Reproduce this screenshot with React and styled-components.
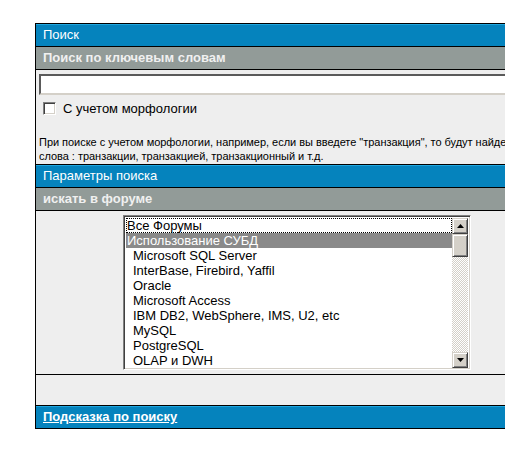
import React from "react";
import styled, { createGlobalStyle } from "styled-components";

const forums = [
  { title: "Все Форумы", focused: true },
  { title: "Использование СУБД", selected: true },
  { title: "Microsoft SQL Server", nested: true },
  { title: "InterBase, Firebird, Yaffil", nested: true },
  { title: "Oracle", nested: true },
  { title: "Microsoft Access", nested: true },
  { title: "IBM DB2, WebSphere, IMS, U2, etc", nested: true },
  { title: "MySQL", nested: true },
  { title: "PostgreSQL", nested: true },
  { title: "OLAP и DWH", nested: true },
];

const GlobalStyle = createGlobalStyle`
  html, body {
    margin: 0;
    padding: 0;
    background: #fff;
    overflow: hidden;
  }
  body {
    font-family: "Liberation Sans", Arial, sans-serif;
  }
`;

const Page = styled.div`
  padding: 23px 0 0 35px;
  width: 600px;
`;

const Panel = styled.div`
  width: 522px;
  background: #000;
  padding: 1px;
  display: flex;
  flex-direction: column;
  gap: 1px;
`;

const BlueRow = styled.div`
  height: 22px;
  line-height: 22px;
  padding-left: 7px;
  background: #0583bd;
  box-shadow: inset 0 1px 0 #1fa6df;
  color: #fff;
  font-size: 13px;
`;

const GreyRow = styled.div`
  height: 22px;
  line-height: 22px;
  padding-left: 7px;
  background: #929b98;
  color: #f0f0f0;
  font-size: 13px;
  font-weight: bold;
`;

const Cell = styled.div`
  background: #eeeeee;
  height: ${(p) => p.height}px;
  box-sizing: border-box;
  padding: ${(p) => p.pad || "0"};
  display: flex;
  flex-direction: column;
  align-items: ${(p) => (p.center ? "center" : "stretch")};
`;

const TextInput = styled.input`
  box-sizing: border-box;
  height: 21px;
  margin: 0 3px;
  width: calc(100% - 6px);
  background: #fff;
  border-style: solid;
  border-width: 2px 1px 2px 2px;
  border-color: #5a5a5a #d4d0c8 #d4d0c8 #5a5a5a;
  outline: none;
  padding: 0 2px;
  font: 13px "Liberation Sans", Arial, sans-serif;
`;

const CheckRow = styled.label`
  display: flex;
  align-items: center;
  gap: 7px;
  margin: 6px 0 0 7px;
  font-size: 13px;
  color: #000;
  height: 14px;
`;

const CheckBox = styled.input`
  appearance: none;
  margin: 0;
  width: 13px;
  height: 13px;
  box-sizing: border-box;
  background: #fff;
  border: 1px solid;
  border-color: #808080 #fff #fff #808080;
  box-shadow: inset 1px 1px 0 #404040, inset -1px -1px 0 #d4d0c8;
`;

const Hint = styled.p`
  margin: 20px 0 0 3px;
  font-size: 11px;
  line-height: 14px;
  letter-spacing: -0.03px;
  color: #000;
  white-space: nowrap;
`;

const ListBox = styled.div`
  width: 348px;
  height: 155px;
  box-sizing: border-box;
  display: flex;
  background: #fff;
  border: 1px solid;
  border-color: #808080 #fff #fff #808080;
  box-shadow: inset 1px 1px 0 #404040, inset -1px -1px 0 #d4d0c8;
  padding: 2px 2px 1px 2px;
`;

const Options = styled.div`
  flex: 1;
  display: flex;
  flex-direction: column;
  overflow: hidden;
`;

const Option = styled.div`
  height: 15px;
  line-height: 15px;
  box-sizing: border-box;
  padding-left: ${(p) => (p.nested ? 7 : 1)}px;
  font-size: 13px;
  white-space: nowrap;
  color: ${(p) => (p.selected ? "#fff" : "#000")};
  background: ${(p) => (p.selected ? "#8a8a8a" : "transparent")};
  outline: ${(p) => (p.focused ? "1px dotted #000" : "none")};
  outline-offset: -1px;
`;

const ScrollBar = styled.div`
  width: 16px;
  display: flex;
  flex-direction: column;
  background: repeating-conic-gradient(#d4d0c8 0 25%, #fff 0 50%) 0 0 / 2px 2px;
`;

const ScrollButton = styled.div`
  width: 16px;
  height: ${(p) => p.size || 16}px;
  box-sizing: border-box;
  background: #d4d0c8;
  border: 1px solid;
  border-color: #d4d0c8 #404040 #404040 #d4d0c8;
  box-shadow: inset 1px 1px 0 #fff, inset -1px -1px 0 #808080;
  display: flex;
  align-items: center;
  justify-content: center;
`;

const Track = styled.div`
  flex: 1;
`;

const FooterLink = styled.a`
  color: #fff;
  font-weight: bold;
  text-decoration: underline;
  cursor: pointer;
`;

const Arrow = ({ down }) => (
  <svg width="7" height="4" viewBox="0 0 7 4">
    <path d={down ? "M0 0H7L3.5 4Z" : "M3.5 0L7 4H0Z"} fill="#000" />
  </svg>
);

const App = () => (
  <Page>
    <GlobalStyle />
    <Panel>
      <BlueRow>Поиск</BlueRow>
      <GreyRow>Поиск по ключевым словам</GreyRow>
      <Cell height={94} pad="4px 0 0 0">
        <TextInput type="text" />
        <CheckRow>
          <CheckBox type="checkbox" />
          С учетом морфологии
        </CheckRow>
        <Hint>
          При поиске с учетом морфологии, например, если вы введете "транзакция", то будут найдены
          <br />
          слова : транзакции, транзакцией, транзакционный и т.д.
        </Hint>
      </Cell>
      <BlueRow>Параметры поиска</BlueRow>
      <GreyRow>искать в форуме</GreyRow>
      <Cell height={163} pad="4px 0 0 0" center>
        <ListBox>
          <Options>
            {forums.map((f) => (
              <Option key={f.title} {...f}>
                {f.title}
              </Option>
            ))}
          </Options>
          <ScrollBar>
            <ScrollButton>
              <Arrow />
            </ScrollButton>
            <ScrollButton size={23} />
            <Track />
            <ScrollButton>
              <Arrow down />
            </ScrollButton>
          </ScrollBar>
        </ListBox>
      </Cell>
      <Cell height={30} />
      <BlueRow>
        <FooterLink>Подсказка по поиску</FooterLink>
      </BlueRow>
    </Panel>
  </Page>
);

export default App;
